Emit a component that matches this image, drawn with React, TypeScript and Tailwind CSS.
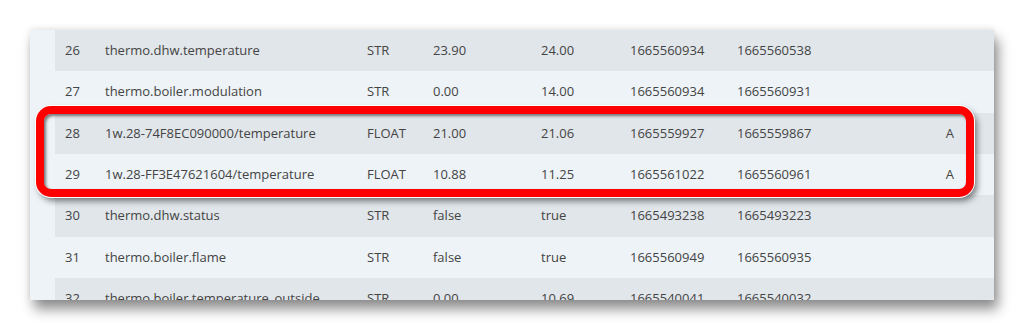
const rows = [
  { id: 26, name: "thermo.dhw.temperature", type: "STR", v1: "23.90", v2: "24.00", t1: "1665560934", t2: "1665560538", flag: "" },
  { id: 27, name: "thermo.boiler.modulation", type: "STR", v1: "0.00", v2: "14.00", t1: "1665560934", t2: "1665560931", flag: "" },
  { id: 28, name: "1w.28-74F8EC090000/temperature", type: "FLOAT", v1: "21.00", v2: "21.06", t1: "1665559927", t2: "1665559867", flag: "A" },
  { id: 29, name: "1w.28-FF3E47621604/temperature", type: "FLOAT", v1: "10.88", v2: "11.25", t1: "1665561022", t2: "1665560961", flag: "A" },
  { id: 30, name: "thermo.dhw.status", type: "STR", v1: "false", v2: "true", t1: "1665493238", t2: "1665493223", flag: "" },
  { id: 31, name: "thermo.boiler.flame", type: "STR", v1: "false", v2: "true", t1: "1665560949", t2: "1665560935", flag: "" },
  { id: 32, name: "thermo.boiler.temperature_outside", type: "STR", v1: "0.00", v2: "10.69", t1: "1665540041", t2: "1665540032", flag: "" },
];

const App = () => {
  return (
    <div
      className="w-[1024px] h-[330px] bg-white pt-[30px] pl-[30px] overflow-hidden"
      style={{ fontFamily: '"Open Sans", "Liberation Sans", sans-serif' }}
    >
      <div className="relative w-[964px] h-[270px] flex bg-[#edf3f7] shadow-[0_-2px_6px_rgba(0,0,0,0.08),4px_9px_12px_rgba(0,0,0,0.45)]">
        {/* left gutter */}
        <div className="w-[25px] shrink-0 bg-[#edf3f7]" />

        {/* table rows */}
        <div className="flex-1 overflow-hidden">
          {rows.map((r, i) => (
            <div
              key={r.id}
              className={`h-[41.33px] grid grid-cols-[40px_262px_66px_108px_89px_107px_1fr_auto] items-center pl-[10px] pr-[40px] text-[13px] text-[#444444] ${
                i % 2 === 0 ? "bg-[#e1e6ea]" : "bg-[#edf3f7]"
              }`}
            >
              <span>{r.id}</span>
              <span>{r.name}</span>
              <span>{r.type}</span>
              <span>{r.v1}</span>
              <span>{r.v2}</span>
              <span>{r.t1}</span>
              <span>{r.t2}</span>
              <span>{r.flag}</span>
            </div>
          ))}
        </div>

        {/* highlight annotation */}
        <div className="absolute left-[6px] top-[76px] w-[938px] h-[91px] rounded-[15px] border-[8px] border-[#ff0000] shadow-[0_0_0_1px_#ffffff,3px_4px_6px_rgba(0,0,0,0.5),inset_2px_2px_3px_rgba(0,0,0,0.5)]" />
      </div>
    </div>
  );
};

export default App;
